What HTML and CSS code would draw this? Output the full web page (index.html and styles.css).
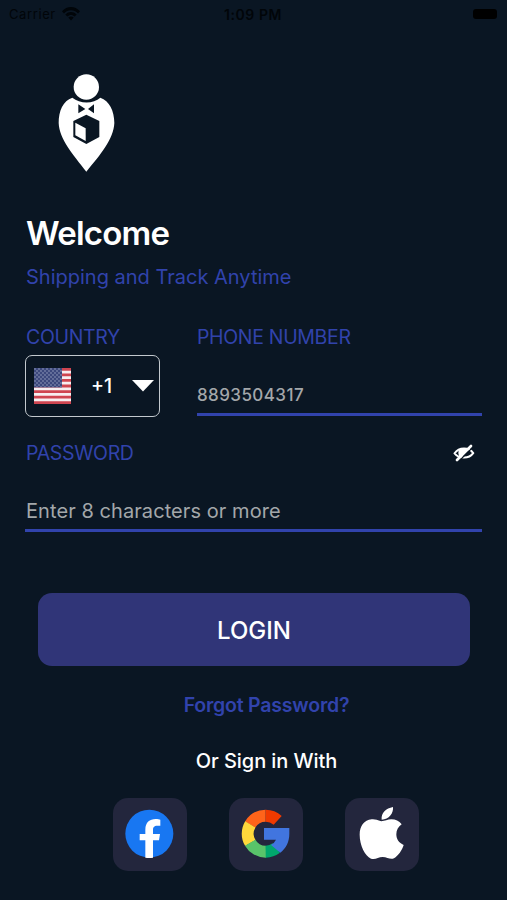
FILE: index.html
```html
<!DOCTYPE html>
<html lang="en">
<head>
<meta charset="utf-8">
<title>Login</title>
<link rel="stylesheet" href="styles.css">
</head>
<body>
<header class="status">
  <div class="carrier"><span class="carrier-name">Carrier</span>
    <svg class="wifi" viewBox="0 0 18 14"><path d="M0 4.3C5-1.4 13-1.4 18 4.3L16 6.4C12 2.2 6 2.2 2 6.4ZM3.3 7.5C6.5 4.2 11.5 4.2 14.7 7.5L12.7 9.5C10.5 7.4 7.5 7.4 5.3 9.5ZM6.3 10.6C8 9.2 10 9.2 11.7 10.6L9 13.5Z"/></svg>
  </div>
  <span class="time">1:09 PM</span>
  <span class="battery"></span>
</header>
<main class="page">
  <svg class="logo" viewBox="0 0 300 375">
    <path fill="#fff" d="M97 113C69 122 56 153 56 189C58 238 99 283 139 335C181 284 221 238 223 189C223 153 208 122 181 113C160 132 120 132 97 113Z"/>
    <circle cx="139" cy="81" r="38" fill="#fff"/>
    <path fill="#0a1623" d="M115 133L136 147L115 160ZM162 133L144 147L162 160ZM139 164L178 183V231L139 252L100 231V183Z"/>
    <path fill="#fff" d="M106 188L137 205V243L106 226Z"/>
  </svg>
  <h1 class="title">Welcome</h1>
  <p class="subtitle">Shipping and Track Anytime</p>
  <form class="form">
    <div class="row">
      <div class="country">
        <div class="label country-label">COUNTRY</div>
        <div class="picker">
          <svg class="flag" viewBox="0 0 37 36">
            <defs><pattern id="stars" width="4" height="4" patternUnits="userSpaceOnUse"><circle cx="1" cy="1" r=".65" fill="#aab2cc"/><circle cx="3" cy="3" r=".65" fill="#aab2cc"/></pattern></defs>
            <path fill="#f7eef0" d="M0 0H37V36H0Z"/>
            <path stroke="#cf4550" stroke-width="2.77" d="M0 1.38H37M0 6.92H37M0 12.46H37M0 18H37M0 23.54H37M0 29.08H37M0 34.62H37"/>
            <path fill="#3c487d" d="M0 0H28V19.4H0Z"/><path fill="url(#stars)" d="M0 0H28V19.4H0Z"/>
          </svg>
          <span class="code">+1</span>
          <svg class="caret" viewBox="0 0 22 12"><path fill="#fff" d="M0 0H22L11 11.5Z"/></svg>
        </div>
      </div>
      <div class="phone">
        <div class="label phone-label">PHONE NUMBER</div>
        <div class="field phone-field"><span class="phone-value">8893504317</span></div>
      </div>
    </div>
    <div class="password-head">
      <span class="label password-label">PASSWORD</span>
      <svg class="eye" viewBox="0 0 22 20"><path fill="none" stroke="#fff" stroke-width="2" d="M1.6 10.3C6 3.9 16 3.9 20.2 10.1C16 16 6 16 1.6 10.3Z"/><path fill="#fff" d="M6 6.500C9 4.700 13 4.700 15 6L7 14.500C5 12 5 9 6 6.500Z"/><path stroke="#0a1623" stroke-width="1.3" d="M5.500 18.500L20.500 3.500"/><path stroke="#fff" stroke-width="2.7" stroke-linecap="round" d="M4 17L18 3"/></svg>
    </div>
    <div class="field password-field"><span class="password-hint">Enter 8 characters or more</span></div>
    <div class="login"><span class="login-text">LOGIN</span></div>
  </form>
  <div class="forgot"><span class="forgot-text">Forgot Password?</span></div>
  <div class="or"><span class="or-text">Or Sign in With</span></div>
  <div class="social">
    <svg class="tile" viewBox="39 39 222 219"><circle cx="148" cy="146" r="72" fill="#1877f2"/><path fill="#fff" d="M136 218V166H119V147H136V134C136 112 149 102 167 102C173 102 178 103 181 104V122H172C162 122 159 127 159 135V147H180L177 166H159V218Q148 220 136 218Z"/></svg>
    <svg class="tile" viewBox="42 39 222 219">
      <g fill="none" stroke-width="36">
        <path stroke="#ff641a" d="M152 92A54 54 0 0 0 105.500 118.500"/>
        <path stroke="#f03a00" d="M152 92A54 54 0 0 1 188 106"/>
        <path stroke="#ffd83b" d="M106 118A54 54 0 0 0 106 174"/>
        <path stroke="#59c36a" d="M105.500 173A54 54 0 0 0 153 200"/>
        <path stroke="#00a66c" d="M152 200A54 54 0 0 0 184 189"/>
      </g>
      <path fill="#4175df" d="M147 129H223V146C223 170 213 190 196 203L168 180Q178 174 183 164H147Z"/>
    </svg>
    <svg class="tile" viewBox="46 39 222 219"><path fill="#fff" d="M155 109C142 105 136 102 126 103C103 105 90 124 90 149C90 181 106 212 124 221C138 225 145 216 159 216C173 216 181 225 193 220C206 212 217 196 222 180C208 174 200 163 200 148C200 135 206 125 216 118C208 108 198 103 185 103C173 103 166 108 155 109ZM156 104C154 84 169 70 190 66C192 84 178 104 156 104Z"/></svg>
  </div>
</main>
</body>
</html>
```
FILE: styles.css
```css
* { box-sizing: border-box; }
body {
  margin: 0;
  height: 900px;
  overflow: hidden;
  background: #0a1623;
  color: #fff;
  font-family: Inter, "Liberation Sans", sans-serif;
}
svg { display: block; flex: none; }
span { white-space: nowrap; }
.status {
  display: grid;
  grid-template-columns: 1fr auto 1fr;
  align-items: center;
  height: 28px;
  padding: 0 10px 0 9px;
  color: #010509;
  font-size: 13px;
}
.carrier { display: flex; align-items: center; gap: 6px; }
.carrier-name { letter-spacing: .6px; }
.wifi { width: 18px; height: 14px; fill: #010509; }
.time { font-size: 14px; font-weight: 600; letter-spacing: .6px; }
.battery { justify-self: end; width: 24px; height: 10px; border-radius: 3px; background: #000; }
.page { padding: 32px 25px 0 26px; }
.logo { width: 100px; height: 125px; margin-left: 14px; }
.title { margin: 28px 0 0; font-size: 33px; line-height: 40px; font-weight: 600; letter-spacing: -.8px; }
.subtitle { margin: 10px 0 0; font-size: 20px; line-height: 28px; color: #3143ac; }
.form { margin-top: 33px; }
.row { display: flex; justify-content: space-between; }
.country { width: 134px; }
.phone { width: 285px; }
.label { color: #3143ac; font-size: 19.5px; line-height: 26px; letter-spacing: -.33px; }
.picker {
  display: flex;
  align-items: center;
  width: 135px;
  height: 62px;
  margin: 5px 0 0 -1px;
  padding: 0 5px 0 8px;
  border: 1.5px solid #c3c9ce;
  border-radius: 7px;
}
.flag { width: 37px; height: 36px; }
.code { margin-left: 20px; font-size: 19.5px; font-weight: 500; }
.caret { width: 22px; height: 12px; margin-left: auto; }
.field { border-bottom: 3px solid #3143ac; color: #a3a7aa; }
.phone-field { height: 66px; padding-top: 33px; font-size: 17px; line-height: 24px; font-weight: 500; letter-spacing: .42px; }
.password-head { display: flex; align-items: center; justify-content: space-between; height: 26px; margin-top: 23px; padding-right: 7px; }
.eye { width: 22px; height: 20px; }
.password-field { height: 66px; margin-left: -1px; padding: 31px 0 0 1px; font-size: 20px; line-height: 28px; letter-spacing: .07px; }
.login {
  display: flex;
  align-items: center;
  justify-content: center;
  height: 73px;
  margin: 61px 12px 0;
  padding-top: 2px;
  border-radius: 14px;
  background: #303578;
  font-size: 24px;
  font-weight: 500;
}
.forgot, .or { display: flex; justify-content: center; padding-left: 25px; line-height: 28px; }
.forgot { margin-top: 25px; color: #3143ac; font-size: 19.5px; font-weight: 600; letter-spacing: -.2px; }
.or { margin-top: 28px; font-size: 20px; font-weight: 500; letter-spacing: -.08px; }
.social { display: flex; gap: 42px; margin: 23px 0 0 87px; }
.tile { width: 74px; height: 73px; border-radius: 15px; background: #23263d; }
```
